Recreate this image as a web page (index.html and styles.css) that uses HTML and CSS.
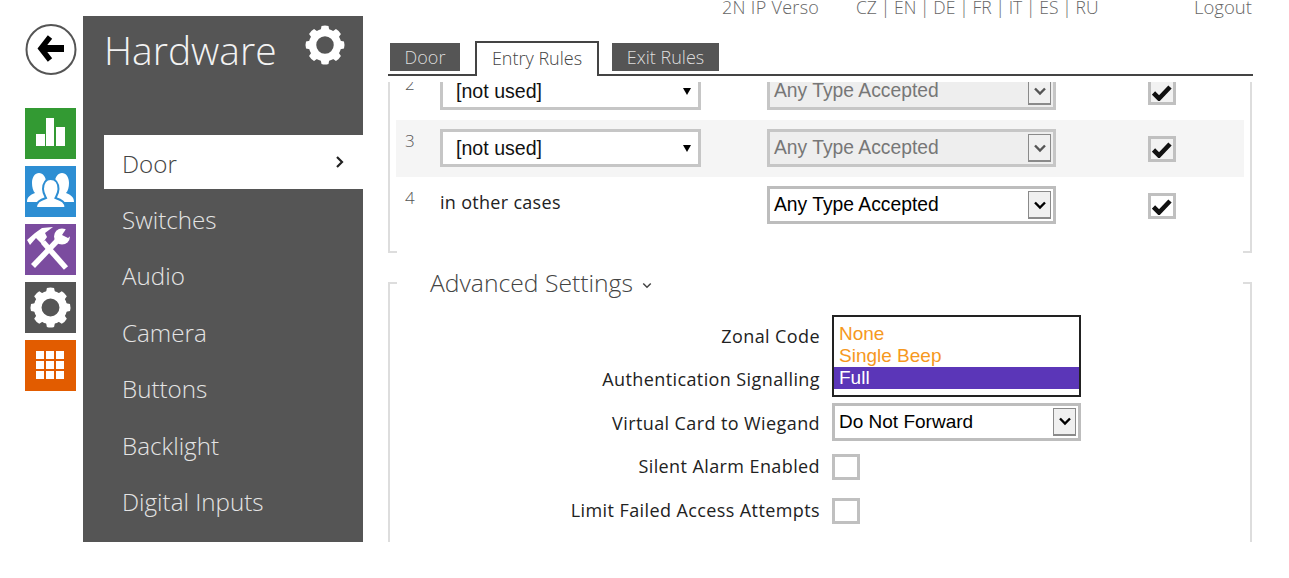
FILE: index.html
```html
<!DOCTYPE html>
<html lang="en">
<head>
<meta charset="utf-8">
<title>Hardware - Door</title>
<link rel="stylesheet" href="styles.css">
</head>
<body>
<svg class="defs" width="0" height="0" aria-hidden="true">
  <defs>
    <g id="gear">
      <circle cx="20" cy="20" r="12.5" fill="none" stroke="#fff" stroke-width="7.5"/>
      <g id="tooth"><path d="M15.500 6 L16.500 1 Q20 0 23.500 1 L24.500 6 Z" fill="#fff"/></g>
      <use href="#tooth" transform="rotate(45 20 20)"/>
      <use href="#tooth" transform="rotate(90 20 20)"/>
      <use href="#tooth" transform="rotate(135 20 20)"/>
      <use href="#tooth" transform="rotate(180 20 20)"/>
      <use href="#tooth" transform="rotate(225 20 20)"/>
      <use href="#tooth" transform="rotate(270 20 20)"/>
      <use href="#tooth" transform="rotate(315 20 20)"/>
    </g>
    <path id="chev" d="M2 2.5 L7 7.5 L12 2.5" fill="none" stroke="currentColor" stroke-width="2.4"/>
    <path id="tick" d="M1.500 9 L7 14.500 L18 3" fill="none" stroke="#111" stroke-width="4.600"/>
  </defs>
</svg>
<div class="page">
  <nav class="rail">
    <a class="back">
      <svg viewBox="0 0 52 52" width="52" height="52"><circle cx="26" cy="25.5" r="24.5" fill="#fff" stroke="#555" stroke-width="2"/><path d="M25 13 L16 24.500 L25 36" fill="none" stroke="#000" stroke-width="5.500"/><path d="M18 24.500 L39 24.500" stroke="#000" stroke-width="7"/></svg>
    </a>
    <div class="tiles">
      <a class="tile green"><svg viewBox="0 0 51 51"><path d="M11 26h9v12h-9zM21 10h8v28h-8zM31 19h9v19h-9z" fill="#fff"/></svg></a>
      <a class="tile blue"><svg viewBox="0 0 51 51">
        <path d="M14 7c4 0 7 4 7 9s-2 7-3 9l8 6-10 5H2c0-5 3-7 8-9-2-2-3-6-3-10 0-6 3-10 7-10z" fill="#fff"/>
        <path d="M37 7c-4 0-7 4-7 9s2 7 3 9l-8 6 10 5h14c0-5-3-7-8-9 2-2 3-6 3-10 0-6-3-10-7-10z" fill="#fff"/>
        <path d="M25.500 13c5 0 8 4 8 10 0 4-2 7-3 9 6 2 10 4 10 10H11c0-6 4-8 10-10-1-2-3-5-3-9 0-6 3-10 7.500-10z" fill="#fff" stroke="#2d8ed3" stroke-width="2"/>
      </svg></a>
      <a class="tile purple"><svg viewBox="0 0 51 51">
        <path d="M18 18 L41 44" stroke="#fff" stroke-width="5.500" fill="none"/>
        <path d="M2 16 L10 9 L17 4 L28 3 L20 9 L22 13 L17 20 L11 14 L5 21 Z" fill="#fff"/>
        <path d="M8 42 L32 17" stroke="#fff" stroke-width="5.500" fill="none"/>
        <circle cx="37" cy="12.500" r="8" fill="#fff"/>
        <path d="M37 11 L43 2 L52 7 L43 14 Z" fill="#7b4c9f"/>
      </svg></a>
      <a class="tile dark"><svg viewBox="0 0 40 40" class="gear-tile"><use href="#gear"/></svg></a>
      <a class="tile orange"><svg viewBox="0 0 51 51"><path d="M11 11h8v8h-8zM21 11h8v8h-8zM31 11h8v8h-8zM11 21h8v8h-8zM21 21h8v8h-8zM31 21h8v8h-8zM11 31h8v8h-8zM21 31h8v8h-8zM31 31h8v8h-8z" fill="#fff"/></svg></a>
    </div>
  </nav>

  <aside class="sidebar">
    <header class="side-head">
      <h1>Hardware</h1>
      <svg viewBox="0 0 40 40" width="40" height="40"><use href="#gear"/></svg>
    </header>
    <ul class="menu">
      <li class="current"><span>Door</span><svg viewBox="0 0 10 14" width="10" height="14"><path d="M2 2 L7 7 L2 12" fill="none" stroke="#222" stroke-width="2.200"/></svg></li>
      <li>Switches</li>
      <li>Audio</li>
      <li>Camera</li>
      <li>Buttons</li>
      <li>Backlight</li>
      <li>Digital Inputs</li>
    </ul>
  </aside>

  <main class="main">
    <div class="topbar">
      <span class="device">2N IP Verso</span>
      <span class="langs">CZ | EN | DE | FR | IT | ES | RU</span>
      <span class="logout">Logout</span>
    </div>
    <div class="tabs">
      <a class="tab door">Door</a>
      <a class="tab active">Entry Rules</a>
      <a class="tab exit">Exit Rules</a>
    </div>

    <section class="rules">
      <div class="rules-inner">
        <div class="rule">
          <span class="num">2</span>
          <div class="pick"><span>[not used]</span><i class="tri"></i></div>
          <div class="sel off"><span>Any Type Accepted</span><b class="btn"><svg viewBox="0 0 14 10" width="14" height="10"><use href="#chev"/></svg></b></div>
          <div class="check off"><svg viewBox="0 0 20 17" width="20" height="17"><use href="#tick"/></svg></div>
        </div>
        <div class="rule alt">
          <span class="num">3</span>
          <div class="pick"><span>[not used]</span><i class="tri"></i></div>
          <div class="sel off"><span>Any Type Accepted</span><b class="btn"><svg viewBox="0 0 14 10" width="14" height="10"><use href="#chev"/></svg></b></div>
          <div class="check off"><svg viewBox="0 0 20 17" width="20" height="17"><use href="#tick"/></svg></div>
        </div>
        <div class="rule">
          <span class="num">4</span>
          <span class="other">in other cases</span>
          <div class="sel"><span>Any Type Accepted</span><b class="btn"><svg viewBox="0 0 14 10" width="14" height="10"><use href="#chev"/></svg></b></div>
          <div class="check"><svg viewBox="0 0 20 17" width="20" height="17"><use href="#tick"/></svg></div>
        </div>
      </div>
    </section>

    <section class="advanced">
      <h2>Advanced Settings <svg viewBox="0 0 12 8" width="10" height="7"><path d="M1.500 1.500 L6 6 L10.500 1.500" fill="none" stroke="#444" stroke-width="1.800"/></svg></h2>
      <div class="form">
        <label>Zonal Code</label>
        <div class="cell">
          <ul class="listbox">
            <li>None</li>
            <li>Single Beep</li>
            <li class="chosen">Full</li>
          </ul>
        </div>
        <label>Authentication Signalling</label>
        <div class="cell"></div>
        <label>Virtual Card to Wiegand</label>
        <div class="cell"><div class="sel wide"><span>Do Not Forward</span><b class="btn"><svg viewBox="0 0 14 10" width="14" height="10"><use href="#chev"/></svg></b></div></div>
        <label>Silent Alarm Enabled</label>
        <div class="cell"><div class="check low"></div></div>
        <label>Limit Failed Access Attempts</label>
        <div class="cell"><div class="check low"></div></div>
      </div>
    </section>
  </main>
</div>
</body>
</html>
```
FILE: styles.css
```css
* { box-sizing: border-box; }
html, body { margin: 0; padding: 0; background: #fff; height: 578px; overflow: hidden; }
body { font-family: "Open Sans", "Noto Sans", sans-serif; color: #222; }
.defs { display: block; height: 0; }
ul { list-style: none; margin: 0; padding: 0; }

.page { display: flex; align-items: flex-start; height: 578px; }

/* left rail */
.rail { width: 51px; margin-left: 25px; padding-top: 24px; flex: none; }
.back { display: block; width: 52px; height: 52px; }
.back svg { display: block; }
.tiles { display: flex; flex-direction: column; gap: 7px; margin-top: 32px; }
.tile { display: flex; align-items: center; justify-content: center; width: 51px; height: 51px; }
.tile svg { display: block; width: 51px; height: 51px; }
.tile .gear-tile { width: 41px; height: 41px; }
.green { background: #339a33; }
.blue { background: #2d8ed3; }
.purple { background: #7b4c9f; }
.dark { background: #555; }
.orange { background: #e25c00; }

/* sidebar */
.sidebar { width: 280px; height: 526px; margin: 16px 0 0 7px; background: #555; flex: none; color: #e4e4e4; }
.side-head { display: flex; justify-content: space-between; align-items: flex-start; height: 119px; padding: 9px 18px 0 21px; }
.side-head h1 { margin: 0; font-size: 39px; font-weight: 300; line-height: 50px; color: #f2f2f2; }
.menu { margin-left: 21px; }
.menu li { display: flex; align-items: center; height: 56.5px; padding-left: 18px; font-size: 24.200px; font-weight: 300; }
.menu li.current { justify-content: space-between; height: 54px; margin-bottom: 2px; padding-right: 18px; background: #fff; color: #444; }
.current span { padding-top: 3px; }

/* main column */
.main { width: 865px; margin-left: 25px; flex: none; }
.topbar { display: flex; height: 41px; color: #666; font-size: 18px; font-weight: 300; line-height: 14px; }
.device { width: 134px; margin-left: 334px; letter-spacing: 0.3px; }
.langs { width: 338px; font-size: 17.500px; word-spacing: -0.75px; }
.logout { width: 59px; font-size: 18.500px; line-height: 13px; }

.tabs { display: flex; align-items: flex-start; height: 35px; padding-left: 2px; border-bottom: 2px solid #444; }
.tab { display: block; font-size: 18px; font-weight: 300; line-height: 29px; text-align: center; }
.door, .exit { height: 28px; margin-top: 2px; background: #555; color: #ddd; }
.door { width: 70px; }
.exit { width: 107px; margin-left: 13px; }
.active { position: relative; z-index: 1; width: 124px; height: 35px; margin-left: 15px; padding-top: 1px; background: #fff; border: 2px solid #444; border-bottom: 0; color: #444; }

/* rule table */
.rules { width: 864px; height: 171px; margin-top: 6px; padding: 0 6px; overflow: hidden;
  border-left: 2px solid #ddd; border-right: 2px solid #ddd;
  background: linear-gradient(#ddd, #ddd) left bottom / 7px 2px no-repeat, linear-gradient(#ddd, #ddd) right bottom / 7px 2px no-repeat; }
.rules-inner { margin-top: -19px; }
.rule { display: grid; grid-template-columns: 44px 261px 355px 120px; align-items: start; height: 57px; padding-top: 9px; }
.rule.alt { background: #f5f5f5; }
.rule .sel { margin-left: 66px; }
.rule .check { margin: 7px 0 0 92px; }
.num { padding-left: 9px; font-size: 17px; font-weight: 300; line-height: 24px; color: #555; }
.other { font-size: 18px; letter-spacing: 0.3px; line-height: 32px; color: #222; }

.pick { display: flex; justify-content: space-between; align-items: center; width: 261px; height: 38px; padding: 0 7px 0 13px; background: #fff; border: 3px solid #c6c6c6; font: 19.600px "Liberation Sans", Arial, sans-serif; color: #111; }
.tri { width: 0; height: 0; border-left: 4px solid transparent; border-right: 4px solid transparent; border-top: 7px solid #000; }

.sel { display: flex; justify-content: space-between; align-items: center; width: 289px; height: 38px; padding: 0 2px 0 4px; background: #fff; border: 3px solid #bdbdbd; font: 19.300px "Liberation Sans", Arial, sans-serif; color: #000; }
.sel .btn { display: flex; align-items: center; justify-content: center; width: 23px; height: 28px; background: #f0f0f0; border: 1px solid #8a8a8a; border-bottom-width: 2px; color: #000; font-weight: 400; }
.sel.off { background: #eee; color: #777; border-color: #c6c6c6; }
.sel.off .btn { color: #555; }
.sel.wide { width: 249px; margin-top: -2px; font-size: 19px; }

.check { display: flex; align-items: center; justify-content: center; width: 28px; height: 26px; background: #fff; border: 3px solid #c0c0c0; }
.check.off { background: #f2f2f2; }
.check.low { margin-top: 2px; }
.check svg { display: block; }

/* advanced */
.advanced { display: flow-root; width: 864px; height: 260px; margin-top: 29px; border-left: 2px solid #ddd; border-right: 2px solid #ddd;
  background: linear-gradient(#ddd, #ddd) left top / 7px 2px no-repeat, linear-gradient(#ddd, #ddd) right top / 7px 2px no-repeat; }
.advanced h2 { margin: -15px 0 0; padding-left: 40px; font-size: 24.700px; font-weight: 300; line-height: 32px; color: #444; }
.advanced h2 svg { margin-left: 3px; vertical-align: middle; }
.form { display: grid; grid-template-columns: 430px 249px; column-gap: 12px; grid-auto-rows: 43.500px; align-items: center; margin-top: 15px; }
.form label { font-size: 18px; letter-spacing: 0.4px; line-height: 24px; text-align: right; color: #222; }
.cell { position: relative; display: flex; align-items: center; height: 100%; }
.listbox { position: absolute; z-index: 2; left: 0; top: 1px; width: 249px; height: 82px; padding-top: 6px; background: #fff; border: 2px solid #222; font: 19px/22px "Liberation Sans", Arial, sans-serif; color: #f6981e; }
.listbox li { height: 22px; padding-left: 5px; }
.listbox .chosen { background: #5b36b8; color: #fff; }
```
